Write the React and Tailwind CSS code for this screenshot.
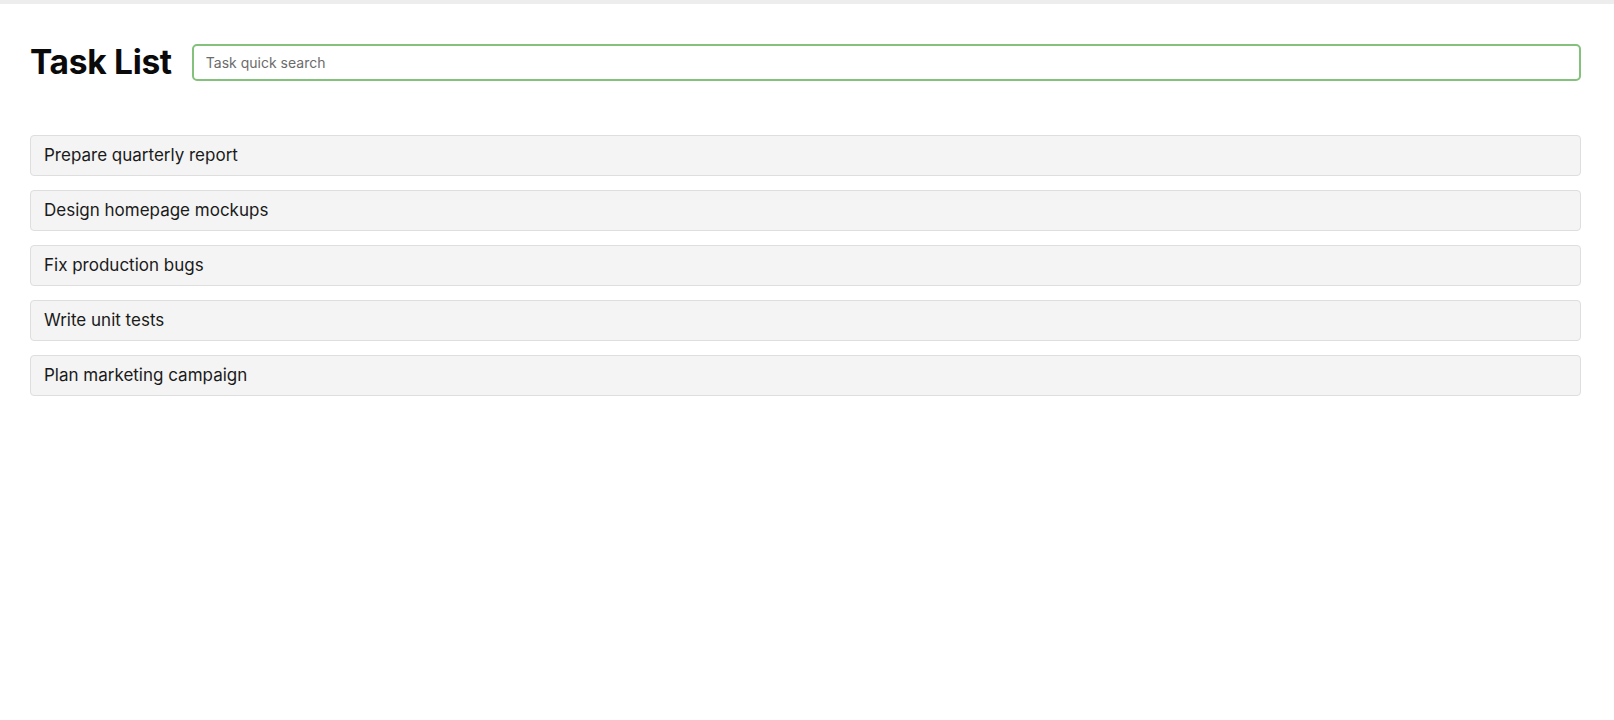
import React, { useState } from 'react';

const tasks = [
  'Prepare quarterly report',
  'Design homepage mockups',
  'Fix production bugs',
  'Write unit tests',
  'Plan marketing campaign',
];

export default function App() {
  const [query, setQuery] = useState('');

  const filtered = tasks.filter(t => t.toLowerCase().includes(query.toLowerCase()));

  return (
    <div className="min-h-screen bg-white font-['Inter','Liberation_Sans',sans-serif] text-[#111]">
      <div className="h-[4px] bg-[#ededed]" />
      <div className="pl-[30px] pr-[33px] pt-[40px]">
        {/* Header */}
        <div className="flex items-center gap-[20px]">
          <h1 className="text-[33.5px] font-bold tracking-[-0.3px] leading-none text-[#0a0a0a] whitespace-nowrap">Task List</h1>
          <input
            type="text"
            value={query}
            onChange={(e) => setQuery(e.target.value)}
            placeholder="Task quick search"
            className="flex-1 h-[37px] px-[12px] border-2 border-[#84c17c] rounded-[5px] text-[14px] text-[#222] placeholder:text-[#6b6b6b] outline-none"
          />
        </div>

        {/* Tasks */}
        <div className="mt-[54px] flex flex-col gap-[14px]">
          {filtered.map(task => (
            <div
              key={task}
              className="h-[41px] flex items-center px-[13px] pt-[1px] bg-[#f4f4f4] border border-[#dedede] rounded-[4px] text-[17px] text-[#1a1a1a]"
            >
              {task}
            </div>
          ))}
        </div>
      </div>
    </div>
  );
}
